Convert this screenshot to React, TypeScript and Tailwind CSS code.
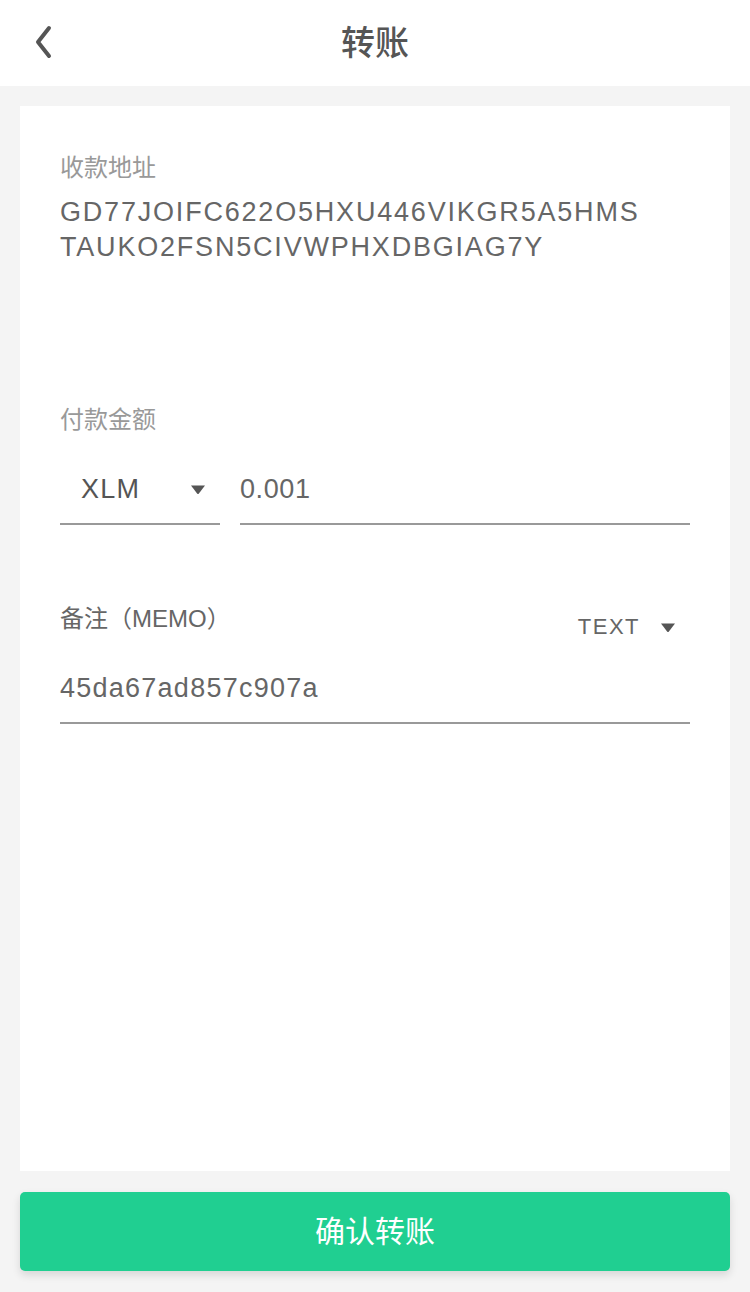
const font = "font-['Liberation_Sans','Noto_Sans_CJK_SC',sans-serif]";

function Caret({ className = "" }: { className?: string }) {
  return (
    <svg width="16" height="11" viewBox="0 0 16 11" className={className}>
      <path d="M1 1.5 H15 L8.9 9.6 Q8 10.6 7.1 9.6 Z" fill="#555" />
    </svg>
  );
}

export default function App() {
  return (
    <div className={`flex min-h-[1292px] w-[750px] flex-col bg-[#f4f4f4] ${font}`}>
      <header className="relative flex h-[86px] items-center justify-center bg-white">
        <svg
          width="24"
          height="36"
          viewBox="0 0 24 36"
          className="absolute left-[31px] top-[24px]"
        >
          <path
            d="M18 4 L7 18 L18 32"
            fill="none"
            stroke="#555"
            strokeWidth="4"
            strokeLinecap="round"
            strokeLinejoin="round"
          />
        </svg>
        <h1 className="text-[34px] font-medium text-[#555]">转账</h1>
      </header>

      <main className="mx-5 mt-5 flex h-[1065px] flex-col bg-white px-10 pt-[45px]">
        <section>
          <p className="text-[24px] leading-[34px] text-[#999]">收款地址</p>
          <p className="mt-[10px] text-[27px] leading-[35px] tracking-[1.8px] text-[#666]">
            GD77JOIFC622O5HXU446VIKGR5A5HMS
            <br />
            TAUKO2FSN5CIVWPHXDBGIAG7Y
          </p>
        </section>

        <section className="mt-[138px]">
          <p className="text-[24px] leading-[34px] text-[#999]">付款金额</p>
          <div className="mt-[35px] flex gap-5">
            <div className="flex h-[53px] w-[160px] items-start justify-between border-b-2 border-[#999] pl-[21px] pr-[14px]">
              <span className="text-[27px] leading-[34px] tracking-[1.2px] text-[#555]">XLM</span>
              <Caret className="mt-[12px]" />
            </div>
            <div className="h-[53px] flex-1 border-b-2 border-[#999]">
              <span className="text-[27px] leading-[34px] tracking-[0.6px] text-[#666]">0.001</span>
            </div>
          </div>
        </section>

        <section className="mt-[77px]">
          <div className="flex items-start justify-between">
            <p className="text-[24px] leading-[34px] text-[#666]">备注（MEMO）</p>
            <div className="mt-[8px] flex items-center gap-[20px] pr-[14px]">
              <span className="text-[22px] leading-[34px] tracking-[1.5px] text-[#666]">TEXT</span>
              <Caret />
            </div>
          </div>
          <div className="mt-[27px] h-[53px] border-b-2 border-[#999]">
            <span className="text-[27px] leading-[34px] tracking-[1.25px] text-[#666]">45da67ad857c907a</span>
          </div>
        </section>
      </main>

      <button className="mx-5 mt-[21px] flex h-[79px] items-center justify-center rounded-[5px] bg-[#20cf91] text-[30px] text-white shadow-[0_4px_8px_rgba(0,0,0,0.12)]">
        确认转账
      </button>
    </div>
  );
}
